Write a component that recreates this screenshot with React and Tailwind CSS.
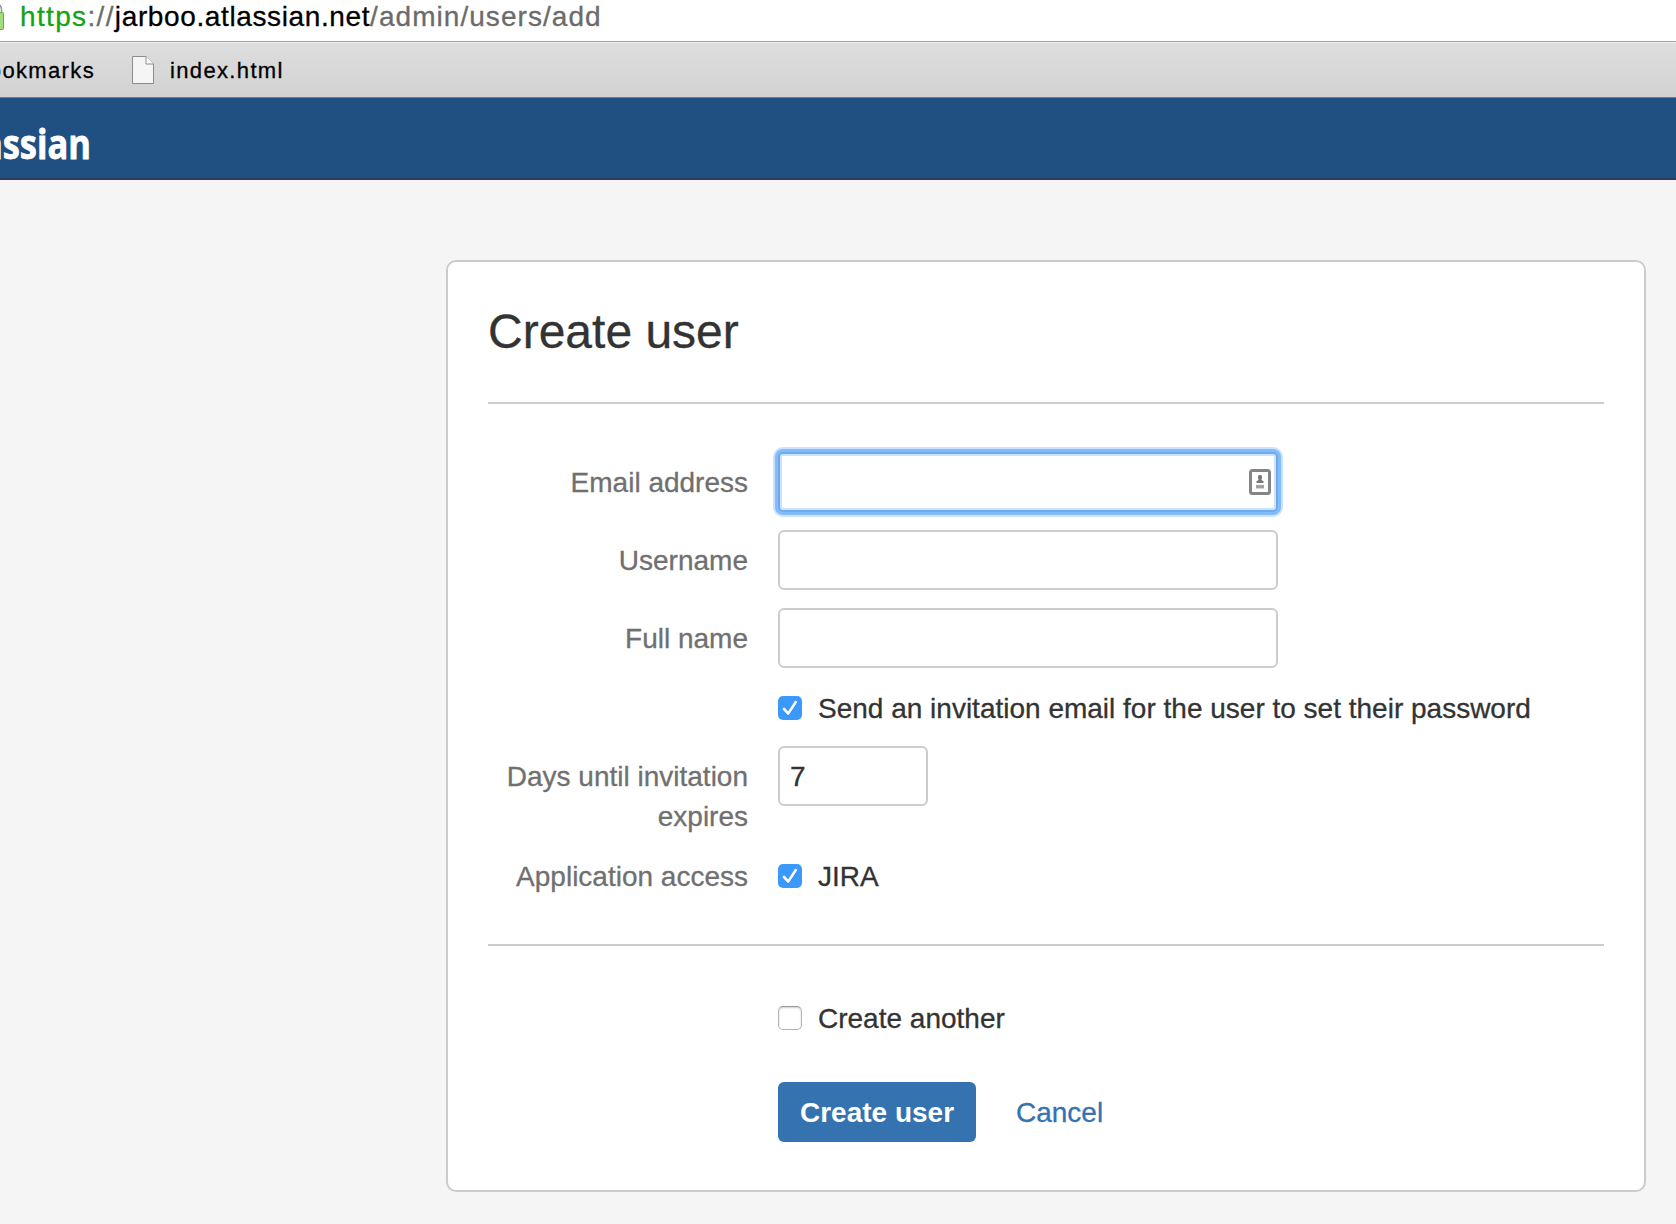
import React from "react";

function Check({ checked, label }) {
  return (
    <label className="flex h-10 items-center gap-4 text-[28px] leading-10 whitespace-nowrap">
      {checked ? (
        <svg width="24" height="24" viewBox="0 0 24 24" className="shrink-0">
          <rect width="24" height="24" rx="5" fill="#3b99fc" />
          <path d="M6 14.2 L10 18.8 L18 6.8" fill="none" stroke="#2f7fd8" strokeWidth="2.6" strokeOpacity="0.4" />
          <path d="M6 13 L10.2 17.6 L17.8 6" fill="none" stroke="#fff" strokeWidth="2.6" strokeLinecap="round" strokeLinejoin="round" />
        </svg>
      ) : (
        <span className="h-6 w-6 shrink-0 rounded-[5px] border border-[#b4b4b4] border-t-[#999] bg-white shadow-[inset_0_1px_2px_rgba(0,0,0,0.2)]" />
      )}
      <span className="pt-0.5">{label}</span>
    </label>
  );
}

function Row({ label, className = "", children }) {
  return (
    <div className={`flex ${className}`}>
      <div className="mr-[30px] w-[260px] shrink-0 pt-px text-right text-[28px] leading-10 text-[#707070]">{label}</div>
      {children}
    </div>
  );
}

function ContactIcon() {
  return (
    <svg width="24" height="28" viewBox="0 0 24 28">
      <rect x="2.5" y="2.5" width="19" height="23" rx="2" fill="#fff" stroke="#858585" strokeWidth="3" />
      <rect x="10" y="7" width="4" height="4" rx="1.5" fill="#777" />
      <path d="M10.5 10h3v2l2 1.2V15h-7v-1.8l2-1.2z" fill="#777" />
      <path d="M8 18.7h8" stroke="#a2a2a2" strokeWidth="3.6" />
    </svg>
  );
}

export default function App() {
  return (
    <div className="flex h-[1224px] w-[1676px] flex-col overflow-hidden bg-[#f5f5f5] font-['Liberation_Sans',Arial,sans-serif] text-[#333] [-webkit-text-stroke:0.3px]">
      <div className="flex h-[41px] shrink-0 bg-white">
        <svg width="20" height="34" viewBox="0 0 20 34" className="shrink-0">
          <path d="M-6 13 V9 Q-6 4.5 -3 4.5 Q1.5 4.5 1.5 10 V13" fill="none" stroke="#999" strokeWidth="1.5" />
          <rect x="-10" y="12.5" width="13.5" height="17" rx="1" fill="#9fdd7d" stroke="#6aa84c" />
        </svg>
        <div className="text-[28px] leading-[34px] tracking-[0.62px] whitespace-nowrap text-[#6b6b6b]">
          <span className="tracking-[1.35px]"><span className="text-[#16a316]">https</span>://</span><span className="text-black">jarboo.atlassian.net</span><span className="tracking-[1.05px]">/admin/users/add</span>
        </div>
      </div>
      <div className="flex h-[57px] shrink-0 items-center border-t border-b border-t-[#a3a3a3] border-b-[#777] bg-linear-to-b from-[#dedede] to-[#d2d2d2] text-[22px] tracking-[1.35px] text-black shadow-[inset_0_1px_0_#eee]">
        <div className="flex w-[132px] shrink-0">
          <span className="flex w-[95px] justify-end overflow-hidden pt-px whitespace-nowrap">Bookmarks</span>
        </div>
        <svg width="22" height="28" viewBox="0 0 22 28" className="shrink-0">
          <path d="M.5.5H14L21.5 8V27.5H.5Z" fill="#f5f5f5" stroke="#8c8c8c" />
          <path d="M14 .5V8H21.5" fill="#fff" stroke="#8c8c8c" />
        </svg>
        <span className="ml-4 pt-px">index.html</span>
      </div>
      <header className="flex h-[82px] shrink-0 border-b-2 border-[#2e3d54] bg-[#205081]">
        <div className="flex w-[91px] justify-end overflow-hidden">
          <span className="origin-right scale-x-[0.82] font-['Open_Sans'] text-[42px] leading-[90px] font-bold text-white [-webkit-text-stroke:0.8px]">Atlassian</span>
        </div>
      </header>
      <main className="mt-20 ml-[446px] h-[932px] w-[1200px] rounded-[10px] border-2 border-[#ccc] bg-white px-10">
        <h1 className="mt-[42px] text-[48px] leading-[56px]">Create user</h1>
        <hr className="mt-[42px] border-t-2 border-[#ccc]" />
        <form className="pt-12">
          <Row label="Email address" className="h-[60px] items-center">
            <div className="flex h-[60px] w-[500px] items-center justify-end rounded-[5px] border-2 border-[#6fabec] bg-white pr-1 shadow-[0_0_0_3px_#82bcfb,0_0_0_5px_#cbe3fe,inset_0_0_0_2px_#cbe3fe]">
              <ContactIcon />
            </div>
          </Row>
          <Row label="Username" className="mt-[18px] h-[60px] items-center">
            <div className="h-[60px] w-[500px] rounded-md border-2 border-[#ccc]" />
          </Row>
          <Row label="Full name" className="mt-[18px] h-[60px] items-center">
            <div className="h-[60px] w-[500px] rounded-md border-2 border-[#ccc]" />
          </Row>
          <Row className="mt-5 h-10">
            <Check checked label="Send an invitation email for the user to set their password" />
          </Row>
          <Row label={<div className="mt-2.5">Days until invitation expires</div>} className="mt-[18px] h-[90px]">
            <div className="h-[60px] w-[150px] rounded-md border-2 border-[#ccc] pl-2.5 text-[28px] leading-[58px]">7</div>
          </Row>
          <Row label="Application access" className="mt-5 h-10">
            <Check checked label="JIRA" />
          </Row>
          <hr className="mt-12 border-t-2 border-[#ccc]" />
          <Row className="mt-[52px] h-10">
            <Check label="Create another" />
          </Row>
          <Row className="mt-11 h-[60px] items-center">
            <button type="button" className="h-[60px] w-[198px] rounded-md bg-[#3572b0] pt-0.5 text-[28px] font-bold whitespace-nowrap text-white [-webkit-text-stroke:0px]">Create user</button>
            <a className="ml-10 pt-0.5 text-[28px] text-[#3572b0]">Cancel</a>
          </Row>
        </form>
      </main>
    </div>
  );
}
